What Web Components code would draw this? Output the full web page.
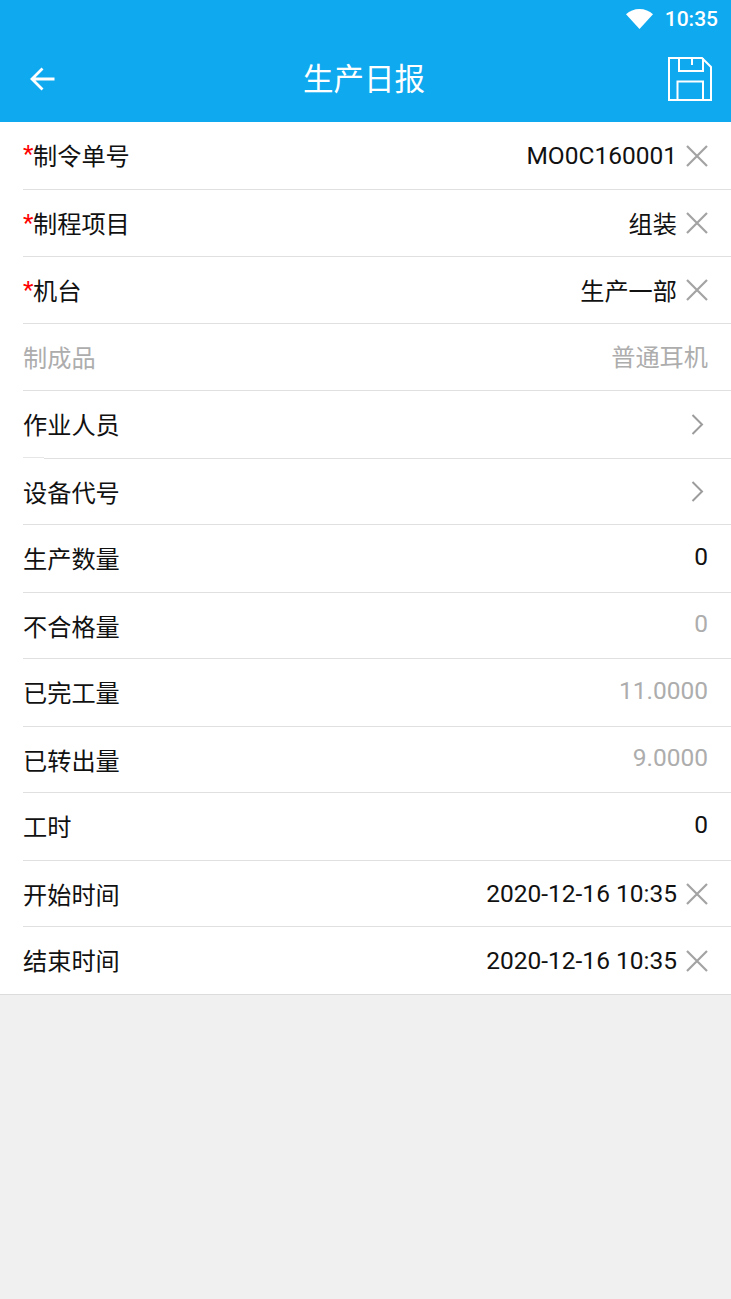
<!DOCTYPE html>
<html lang="zh">
<head>
<meta charset="utf-8">
<title>生产日报</title>
<style>
  html, body { margin: 0; padding: 0; height: 100%; background: #f0f0f0; }
  body { font-family: Roboto, "Noto Sans CJK SC", sans-serif; }
</style>
</head>
<body>
<app-header title="生产日报"></app-header>
<form-list>
  <form-row h="68" required label="制令单号" value="MO0C160001" icon="close"></form-row>
  <form-row h="67" required label="制程项目" value="组装" icon="close"></form-row>
  <form-row h="67" required label="机台" value="生产一部" icon="close"></form-row>
  <form-row h="67" muted label="制成品" value="普通耳机"></form-row>
  <form-row h="68" notch label="作业人员" icon="arrow"></form-row>
  <form-row h="66" label="设备代号" icon="arrow"></form-row>
  <form-row h="68" label="生产数量" value="0"></form-row>
  <form-row h="66" dim label="不合格量" value="0"></form-row>
  <form-row h="68" dim label="已完工量" value="11.0000"></form-row>
  <form-row h="66" dim label="已转出量" value="9.0000"></form-row>
  <form-row h="68" label="工时" value="0"></form-row>
  <form-row h="66" label="开始时间" value="2020-12-16 10:35" icon="close"></form-row>
  <form-row h="68" last label="结束时间" value="2020-12-16 10:35" icon="close"></form-row>
</form-list>

<script>
class AppHeader extends HTMLElement {
  constructor() {
    super();
    this.shadowDOM = this.attachShadow({ mode: 'open' });
  }

  connectedCallback() {
    this.shadowDOM.innerHTML = `
      <style>
        :host {
          display: block;
          background: #0fa9ef;
          color: #fff;
          height: 122px;
          font-family: Roboto, "Noto Sans CJK SC", sans-serif;
        }
        .status {
          height: 38px;
          display: flex;
          justify-content: flex-end;
          align-items: center;
          gap: 12px;
          padding-right: 13px;
          font-size: 21px;
          font-weight: 500;
        }
        .bar {
          height: 84px;
          display: grid;
          grid-template-columns: 1fr auto 1fr;
          align-items: center;
          padding: 0 19px;
        }
        .title { font-size: 30.5px; line-height: 84px; margin: -1px 3px 0 0; }
        .save { justify-self: end; display: flex; margin-top: -2px; }
        .back { display: flex; margin: -2px 0 0 10px; }
        svg { display: block; }
      </style>
      <div class="status">
        <svg width="27" height="20" viewBox="0 0 27 20"><path d="M0 5.200C3.600 2 8.300 0 13.500 0S23.400 2 27 5.200L13.500 20z" fill="#fff"/></svg>
        <span>10:35</span>
      </div>
      <div class="bar">
        <span class="back">
          <svg width="26" height="26" viewBox="0 0 26 26" fill="none" stroke="#fff" stroke-width="2.800"><path d="M25.500 13H4M13.500 2.500L3 13l10.500 10.500"/></svg>
        </span>
        <span class="title">${this.getAttribute('title')}</span>
        <span class="save">
          <svg width="44" height="44" viewBox="0 0 44 44" fill="none" stroke="#fff" stroke-width="2"><path d="M1 1H34L43 10V43H1zM11 1V14H35V1M24 1V8M9.500 43V24.500H35V43"/></svg>
        </span>
      </div>
    `;
  }
}

class FormList extends HTMLElement {
  constructor() {
    super();
    this.shadowDOM = this.attachShadow({ mode: 'open' });
    this.shadowDOM.innerHTML = `
      <style>
        :host { display: block; background: #fff; }
      </style>
      <slot></slot>
    `;
  }
}

class FormRow extends HTMLElement {
  constructor() {
    super();
    this.shadowDOM = this.attachShadow({ mode: 'open' });
  }

  iconMarkup() {
    const icon = this.getAttribute('icon');
    if (icon === 'close') {
      return '<svg width="24" height="24" viewBox="0 0 24 24" fill="none" stroke="#a3a3a3" stroke-width="2.200"><path d="M2 2L22 22M22 2L2 22"/></svg>';
    }
    if (icon === 'arrow') {
      return '<svg class="arrow" width="24" height="24" viewBox="0 0 24 24" fill="none" stroke="#9c9c9c" stroke-width="2"><path d="M7.500 3L17 12.500L7.500 22"/></svg>';
    }
    return '';
  }

  connectedCallback() {
    const label = this.getAttribute('label');
    const value = this.getAttribute('value') || '';
    const star = this.hasAttribute('required') ? '<i>*</i>' : '';
    const hasIcon = this.hasAttribute('icon');
    const isCjk = /[\u4e00-\u9fff]/.test(value);
    let textShift = hasIcon ? 0 : 4;
    if (isCjk) textShift = hasIcon ? 2 : 4;
    const labelShift = this.getAttribute('h') === '68' ? 3 : 1;
    this.shadowDOM.innerHTML = `
      <style>
        :host {
          display: block;
          position: relative;
          box-sizing: border-box;
          height: ${this.getAttribute('h')}px;
          margin-left: ${this.hasAttribute('last') ? 0 : 23}px;
          padding-left: ${this.hasAttribute('last') ? 23 : 0}px;
          border-bottom: 1px solid ${this.hasAttribute('last') ? '#dcdcdc' : '#e0e0e0'};
          font-family: Roboto, "Noto Sans CJK SC", sans-serif;
          font-size: 24.500px;
          color: #111;
        }
        .row {
          height: 100%;
          display: flex;
          align-items: center;
          justify-content: space-between;
          padding-right: 22px;
        }
        .label { display: flex; align-items: center; margin-bottom: ${labelShift}px; font-size: 24.200px; }
        i { color: #f00; font-style: normal; width: 10px; }
        .value { display: flex; align-items: center; gap: 8px; }
        .text { margin-bottom: ${textShift}px; ${hasIcon ? '' : 'margin-right: 1px;'} ${isCjk ? 'font-size: 24.200px;' : ''} }
        .muted { color: #adadad; }
        svg { display: block; }
        svg.arrow { margin-bottom: 2px; }
        ${this.hasAttribute('notch') ? `.notch { position: absolute; left: 0; bottom: 0; width: 21px; height: 1px; background: #e6e6e6; }
        :host { border-bottom-color: transparent; }
        .line { position: absolute; left: 21px; right: 0; bottom: -1px; height: 1px; background: #e0e0e0; }` : ''}
      </style>
      <div class="row">
        <span class="label ${this.hasAttribute('muted') ? 'muted' : ''}">${star}${label}</span>
        <span class="value ${this.hasAttribute('muted') || this.hasAttribute('dim') ? 'muted' : ''}">
          <span class="text">${value}</span>${this.iconMarkup()}
        </span>
      </div>
      ${this.hasAttribute('notch') ? '<div class="notch"></div><div class="line"></div>' : ''}
    `;
  }
}

customElements.define('app-header', AppHeader);
customElements.define('form-list', FormList);
customElements.define('form-row', FormRow);
</script>
</body>
</html>
